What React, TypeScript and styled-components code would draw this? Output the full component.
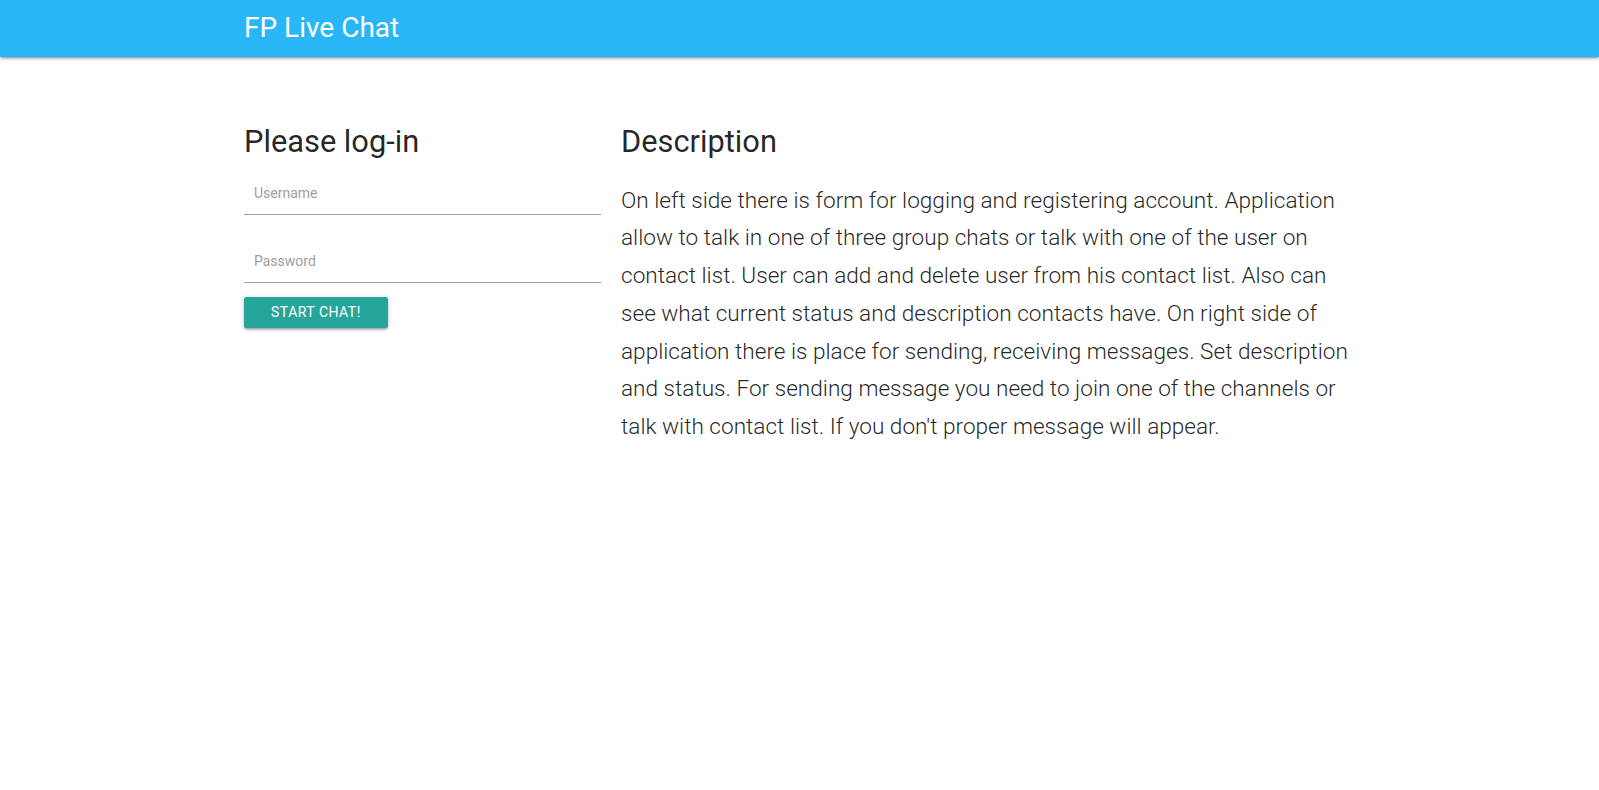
import React, { useState } from "react";
import styled, { createGlobalStyle } from "styled-components";

const GlobalStyle = createGlobalStyle`
  html, body {
    margin: 0;
    padding: 0;
    background: #ffffff;
  }

  body {
    font-family: Roboto, "Liberation Sans", sans-serif;
    font-weight: 400;
    color: rgba(0, 0, 0, 0.87);
    line-height: 1.5;
  }

  * {
    box-sizing: border-box;
  }
`;

export default function App() {
  const [username, setUsername] = useState("");
  const [password, setPassword] = useState("");

  return (
    <>
      <GlobalStyle />
      <NavBar>
        <NavWrapper>
          <BrandLogo href="#">FP Live Chat</BrandLogo>
        </NavWrapper>
      </NavBar>
      <Container>
        <LoginColumn>
          <Heading>Please log-in</Heading>
          <LoginForm onSubmit={(event) => event.preventDefault()}>
            <TextInput
              type="text"
              placeholder="Username"
              value={username}
              onChange={(event: React.ChangeEvent<HTMLInputElement>) =>
                setUsername(event.target.value)
              }
            />
            <TextInput
              type="password"
              placeholder="Password"
              value={password}
              onChange={(event: React.ChangeEvent<HTMLInputElement>) =>
                setPassword(event.target.value)
              }
            />
            <StartButton type="submit">Start chat!</StartButton>
          </LoginForm>
        </LoginColumn>
        <DescriptionColumn>
          <Heading>Description</Heading>
          <FlowText>
            On left side there is form for logging and registering account.
            Application allow to talk in one of three group chats or talk with
            one of the user on contact list. User can add and delete user from
            his contact list. Also can see what current status and description
            contacts have. On right side of application there is place for
            sending, receiving messages. Set description and status. For
            sending message you need to join one of the channels or talk with
            contact list. If you don't proper message will appear.
          </FlowText>
        </DescriptionColumn>
      </Container>
    </>
  );
}

const NavBar = styled.nav`
  width: 100%;
  height: 57px;
  background-color: #29b6f6;
  box-shadow: 0 2px 2px 0 rgba(0, 0, 0, 0.14),
    0 3px 1px -2px rgba(0, 0, 0, 0.12), 0 1px 5px 0 rgba(0, 0, 0, 0.2);
  position: relative;
  z-index: 1;
`;

const NavWrapper = styled.div`
  width: 1111px;
  height: 100%;
  margin: 0 auto;
  display: flex;
  align-items: flex-start;
`;

const BrandLogo = styled.a`
  font-size: 28px;
  line-height: 55px;
  color: #ffffff;
  text-decoration: none;
  white-space: nowrap;
`;

const Container = styled.main`
  width: 1111px;
  margin: 0 auto;
  padding-top: 66.6px;
  display: grid;
  grid-template-columns: 357px 1fr;
  column-gap: 20px;
  align-items: start;
`;

const LoginColumn = styled.section`
  display: block;
`;

const DescriptionColumn = styled.section`
  display: block;
`;

const Heading = styled.h4`
  font-size: 30.8px;
  font-weight: 400;
  line-height: 35.11px;
  margin: 0 0 12.77px;
`;

const LoginForm = styled.form`
  display: flex;
  flex-direction: column;
  align-items: flex-start;
  padding-top: 0.3px;
`;

const TextInput = styled.input`
  width: 100%;
  height: 43px;
  margin: 0 0 25px;
  padding: 0 0 0 10px;
  border: none;
  border-bottom: 1px solid #9e9e9e;
  border-radius: 0;
  outline: none;
  background: transparent;
  font-family: Roboto, "Liberation Sans", sans-serif;
  font-size: 14px;
  color: rgba(0, 0, 0, 0.87);

  &::placeholder {
    color: #9e9e9e;
  }

  &:last-of-type {
    margin-bottom: 14px;
  }
`;

const StartButton = styled.button`
  height: 31.5px;
  padding: 0 27px;
  border: none;
  border-radius: 2px;
  background-color: #26a69a;
  color: #ffffff;
  font-family: Roboto, "Liberation Sans", sans-serif;
  font-size: 14px;
  line-height: 31.5px;
  letter-spacing: 0.5px;
  text-transform: uppercase;
  cursor: pointer;
  box-shadow: 0 2px 2px 0 rgba(0, 0, 0, 0.14),
    0 3px 1px -2px rgba(0, 0, 0, 0.12), 0 1px 5px 0 rgba(0, 0, 0, 0.2);
`;

const FlowText = styled.p`
  margin: 23px 0 0;
  font-size: 22.6px;
  font-weight: 300;
  line-height: 37.7px;
`;
